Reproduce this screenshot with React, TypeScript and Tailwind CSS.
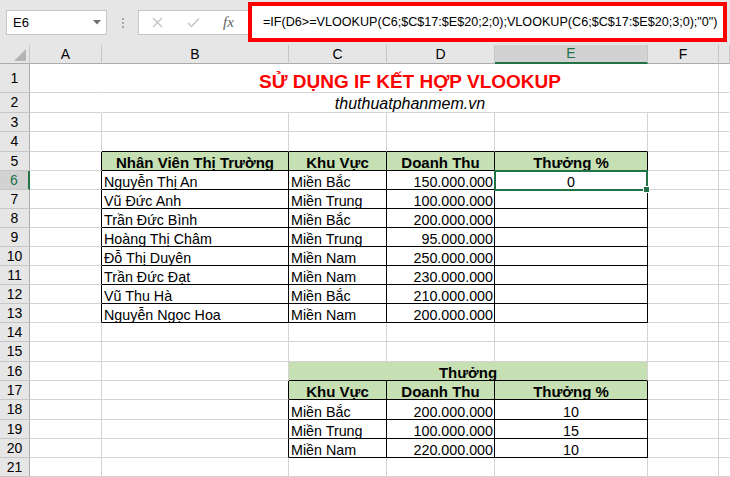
import React from 'react';

const FONT = { fontFamily: '"Liberation Sans", Arial, sans-serif' };

const staff = [
  ['Nguyễn Thị An', 'Miền Bắc', '150.000.000'],
  ['Vũ Đức Anh', 'Miền Trung', '100.000.000'],
  ['Trần Đức Bình', 'Miền Bắc', '200.000.000'],
  ['Hoàng Thị Châm', 'Miền Trung', '95.000.000'],
  ['Đỗ Thị Duyên', 'Miền Nam', '250.000.000'],
  ['Trần Đức Đạt', 'Miền Nam', '230.000.000'],
  ['Vũ Thu Hà', 'Miền Bắc', '210.000.000'],
  ['Nguyễn Ngọc Hoa', 'Miền Nam', '200.000.000'],
];

const bonus = [
  ['Miền Bắc', '200.000.000', '10'],
  ['Miền Trung', '100.000.000', '15'],
  ['Miền Nam', '220.000.000', '10'],
];

type Align = 'left' | 'right' | 'center';

interface Cell {
  col: number; // 0 = A ... 6 = G
  span?: 1 | 3 | 5;
  text?: string;
  align?: Align;
  bold?: boolean;
  fill?: boolean;
  kind?: 'title' | 'sub';
  selected?: boolean;
}

// right border: black inside the two tables, hidden across the merged title rows
function rightBorder(r: number, c: number) {
  if (r <= 2 && c === 0) return 'border-r-white';
  if (c === 6) return 'border-r-white';
  if (r >= 5 && r <= 13 && c <= 4) return 'border-r-black';
  if (r >= 17 && r <= 20 && c >= 1 && c <= 4) return 'border-r-black';
  return 'border-r-[#d4d4d4]';
}

function bottomBorder(r: number, c: number) {
  if (r >= 4 && r <= 13 && c >= 1 && c <= 4) return 'border-b-black';
  if (r >= 16 && r <= 20 && c >= 2 && c <= 4) return 'border-b-black';
  return 'border-b-[#d4d4d4]';
}

function rowCells(r: number): Cell[] {
  const empty = (c: number): Cell => ({ col: c });
  if (r === 1) return [empty(0), { col: 1, span: 5, text: 'SỬ DỤNG IF KẾT HỢP VLOOKUP', kind: 'title' }, empty(6)];
  if (r === 2) return [empty(0), { col: 1, span: 5, text: 'thuthuatphanmem.vn', kind: 'sub' }, empty(6)];
  if (r === 5)
    return [
      empty(0),
      { col: 1, text: 'Nhân Viên Thị Trường', align: 'center', bold: true, fill: true },
      { col: 2, text: 'Khu Vực', align: 'center', bold: true, fill: true },
      { col: 3, text: 'Doanh Thu', align: 'center', bold: true, fill: true },
      { col: 4, text: 'Thưởng %', align: 'center', bold: true, fill: true },
      empty(5),
      empty(6),
    ];
  if (r >= 6 && r <= 13) {
    const [name, region, rev] = staff[r - 6];
    return [
      empty(0),
      { col: 1, text: name },
      { col: 2, text: region },
      { col: 3, text: rev, align: 'right' },
      { col: 4, text: r === 6 ? '0' : undefined, align: 'center', selected: r === 6 },
      empty(5),
      empty(6),
    ];
  }
  if (r === 16)
    return [empty(0), empty(1), { col: 2, span: 3, text: 'Thưởng', align: 'center', bold: true, fill: true }, empty(5), empty(6)];
  if (r === 17)
    return [
      empty(0),
      empty(1),
      { col: 2, text: 'Khu Vực', align: 'center', bold: true, fill: true },
      { col: 3, text: 'Doanh Thu', align: 'center', bold: true, fill: true },
      { col: 4, text: 'Thưởng %', align: 'center', bold: true, fill: true },
      empty(5),
      empty(6),
    ];
  if (r >= 18 && r <= 20) {
    const [region, rev, pct] = bonus[r - 18];
    return [
      empty(0),
      empty(1),
      { col: 2, text: region },
      { col: 3, text: rev, align: 'right' },
      { col: 4, text: pct, align: 'center' },
      empty(5),
      empty(6),
    ];
  }
  return [0, 1, 2, 3, 4, 5, 6].map(empty);
}

function SheetCell({ r, cell }: { r: number; cell: Cell }) {
  const lastCol = cell.col + (cell.span ?? 1) - 1;
  const span = cell.span === 5 ? 'col-span-5' : cell.span === 3 ? 'col-span-3' : '';

  if (cell.kind === 'title') {
    return (
      <div className={`${span} flex items-end justify-center border-r border-b border-r-[#d4d4d4] border-b-[#d4d4d4] bg-white pb-[1px]`}>
        <span className="text-[19px] leading-none font-bold text-[#ff0000]">{cell.text}</span>
      </div>
    );
  }
  if (cell.kind === 'sub') {
    return (
      <div className={`${span} flex items-end justify-center border-r border-b border-r-[#d4d4d4] border-b-[#d4d4d4] bg-white`}>
        <span className="text-[16px] leading-none text-black italic">{cell.text}</span>
      </div>
    );
  }

  const align =
    cell.align === 'right'
      ? 'justify-end pr-[1px]'
      : cell.align === 'center'
        ? 'justify-center'
        : 'justify-start pl-[2px]';

  return (
    <div
      className={`${span} ${cell.selected ? 'relative' : ''} flex min-w-0 items-end whitespace-nowrap border-r border-b ${rightBorder(r, lastCol)} ${bottomBorder(r, lastCol)} ${cell.fill ? 'bg-[#c6e0b4]' : 'bg-white'} ${align}`}
    >
      {cell.text !== undefined && (
        <span className={`leading-none text-black ${cell.bold ? 'text-[15px] font-bold' : 'text-[14.3px]'}`}>{cell.text}</span>
      )}
      {cell.selected && (
        <div className="absolute -top-[1px] -right-[1px] -bottom-[2px] -left-[1px] z-10 border-2 border-[#217346]">
          <div className="absolute -right-[4px] -bottom-[4px] box-content h-[5px] w-[5px] border border-white bg-[#217346]" />
        </div>
      )}
    </div>
  );
}

function ColumnHeader() {
  const letters = ['A', 'B', 'C', 'D', 'E', 'F', ''];
  return (
    <>
      <div className="flex items-end justify-end border-r border-b border-r-[#c6c6c6] border-b-[#ababab] bg-[#e6e6e6] pr-[3px] pb-[2px]">
        <svg width="12" height="12" viewBox="0 0 12 12">
          <polygon points="12,0 12,12 0,12" fill="#b4b4b4" />
        </svg>
      </div>
      {letters.map((l, i) =>
        l === 'E' ? (
          <div
            key={i}
            className="flex items-center justify-center border-r border-b-2 border-r-[#c6c6c6] border-b-[#217346] bg-[#d2d2d2] text-[14px] text-[#217346]"
          >
            {l}
          </div>
        ) : (
          <div
            key={i}
            className="flex items-center justify-center border-r border-b border-r-[#c6c6c6] border-b-[#ababab] bg-[#e6e6e6] text-[14px] text-black"
          >
            {l}
          </div>
        ),
      )}
    </>
  );
}

function Toolbar() {
  return (
    <div className="flex h-[45px] bg-[#e6e6e6]">
      <div className="mt-[10px] ml-[6px] flex h-[25px] w-[101px] items-center justify-between border border-[#c6c6c6] bg-white pr-[5px] pl-[6px]">
        <span className="text-[13px] text-black">E6</span>
        <svg width="8" height="5" viewBox="0 0 8 5">
          <polygon points="0,0 8,0 4,4.5" fill="#6f6f6f" />
        </svg>
      </div>
      <div className="mt-[10px] flex h-[25px] w-[31px] flex-col items-center justify-center gap-[2px]">
        <span className="h-[2px] w-[2px] bg-[#a6a6a6]" />
        <span className="h-[2px] w-[2px] bg-[#a6a6a6]" />
        <span className="h-[2px] w-[2px] bg-[#a6a6a6]" />
      </div>
      <div className="mt-[10px] flex h-[25px] w-[110px] items-center border border-r-0 border-[#c6c6c6] bg-white pl-[13px]">
        <svg width="11" height="11" viewBox="0 0 11 11">
          <path d="M1 1L10 10M10 1L1 10" stroke="#c4c4c4" strokeWidth="1.4" fill="none" />
        </svg>
        <svg className="ml-[24px]" width="13" height="11" viewBox="0 0 13 11">
          <path d="M1 6L4.5 9.5L12 1.5" stroke="#c4c4c4" strokeWidth="1.5" fill="none" />
        </svg>
        <span
          className="ml-[23px] text-[15px] leading-none text-[#5f5f5f] italic"
          style={{ fontFamily: '"Liberation Serif", "Times New Roman", serif' }}
        >
          fx
        </span>
      </div>
      <div className="mt-[2px] flex h-[40px] w-[479px] items-center border-4 border-[#ff0000] bg-white pl-[11px]">
        <span className="text-[12.6px] whitespace-nowrap text-black">
          =IF(D6&gt;=VLOOKUP(C6;$C$17:$E$20;2;0);VLOOKUP(C6;$C$17:$E$20;3;0);"0")
        </span>
      </div>
    </div>
  );
}

export default function App() {
  const rows = Array.from({ length: 21 }, (_, i) => i + 1);
  return (
    <div className="h-[477px] w-[730px] overflow-hidden bg-white" style={FONT}>
      <Toolbar />
      <div className="grid grid-cols-[30px_72px_187px_98px_108px_153px_71px_11px] grid-rows-[19px_29px_20px_19px_20px_19px_19px_19px_19px_19px_19px_19px_19px_19px_19px_20px_19px_19px_20px_19px_19px_19px]">
        <ColumnHeader />
        {rows.map((r) => (
          <React.Fragment key={r}>
            {r === 6 ? (
              <div className="flex items-center justify-center border-r-2 border-b border-r-[#217346] border-b-[#c6c6c6] bg-[#d2d2d2] text-[14px] text-[#217346]">
                {r}
              </div>
            ) : (
              <div className="flex items-center justify-center border-r border-b border-r-[#ababab] border-b-[#c6c6c6] bg-[#e6e6e6] text-[14px] text-black">
                {r}
              </div>
            )}
            {rowCells(r).map((cell) => (
              <SheetCell key={cell.col} r={r} cell={cell} />
            ))}
          </React.Fragment>
        ))}
      </div>
    </div>
  );
}
